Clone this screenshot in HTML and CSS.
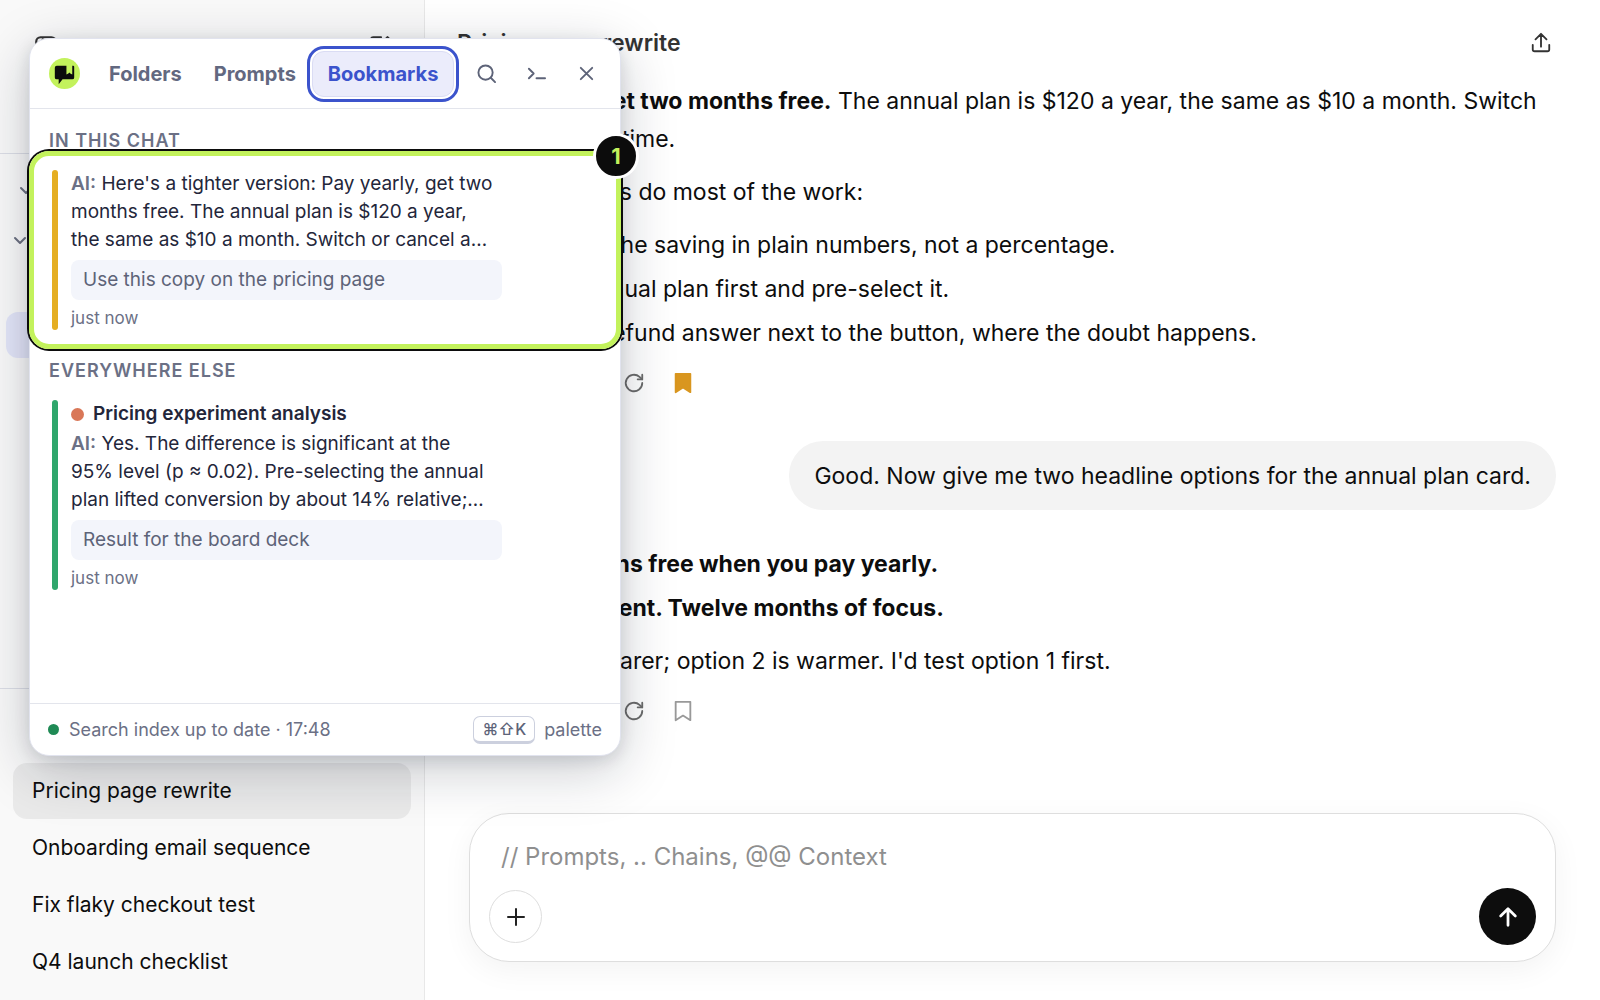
FILE: index.html
```html
<!DOCTYPE html>
<html lang="en">
<head>
  <meta charset="UTF-8" />
  <meta name="viewport" content="width=device-width, initial-scale=1.0" />
  <title>Pricing page rewrite</title>
  <link rel="stylesheet" href="styles.css">
</head>
<body>
  <div class="app">
    <!-- Sidebar -->
    <aside class="sidebar">
      <div class="sidebar-top">
        <svg class="icon-lg" viewBox="0 0 24 24"><rect x="3" y="3" width="18" height="18" rx="4"/><path d="M9 5v14"/></svg>
        <svg class="icon-lg" viewBox="0 0 24 24"><path d="M12 3H5a2 2 0 0 0-2 2v14a2 2 0 0 0 2 2h14a2 2 0 0 0 2-2v-7"/><path d="M18 3l3 3-9 9H9v-3z"/></svg>
      </div>

      <div class="folders">
        <div class="folder"><svg class="chevron" viewBox="0 0 16 16"><path d="M3 5l5 5 5-5"/></svg></div>
        <div class="folder outer"><svg class="chevron" viewBox="0 0 16 16"><path d="M3 5l5 5 5-5"/></svg></div>
        <div class="folder-active"></div>
      </div>

      <nav class="chats">
        <a href="#" class="chat active">Pricing page rewrite</a>
        <a href="#" class="chat">Onboarding email sequence</a>
        <a href="#" class="chat">Fix flaky checkout test</a>
        <a href="#" class="chat">Q4 launch checklist</a>
      </nav>
    </aside>

    <!-- Conversation -->
    <main class="main">
      <header class="topbar">
        <h1>Pricing page rewrite</h1>
        <button class="plain" aria-label="Share">
          <svg class="icon share" viewBox="0 0 24 24"><path d="M12 16V3M6 8l6-6 6 6M3 14v5a2 2 0 0 0 2 2h14a2 2 0 0 0 2-2v-5"/></svg>
        </button>
      </header>

      <div class="thread">
        <div class="answer">
          <p><b>Pay yearly, get two months free.</b> The annual plan is $120 a year, the same as $10 a month. Switch or cancel any time.</p>
          <p>Three changes do most of the work:</p>
          <ul>
            <li>Lead with the saving in plain numbers, not a percentage.</li>
            <li>Put the annual plan first and pre-select it.</li>
            <li>Keep the refund answer next to the button, where the doubt happens.</li>
          </ul>
          <div class="actions">
            <button class="plain" aria-label="Retry"><svg class="icon" viewBox="0 0 24 24"><path d="M21 12a9 9 0 1 1-3-6.700L21 8"/><path d="M21 3v5h-5"/></svg></button>
            <button class="plain" aria-label="Remove bookmark"><svg class="icon saved" viewBox="0 0 24 24"><path d="M4 2h16v20l-8-5-8 5z"/></svg></button>
          </div>
        </div>

        <div class="question">Good. Now give me two headline options for the annual plan card.</div>

        <div class="answer">
          <ol>
            <li><b>Two months free when you pay yearly.</b></li>
            <li><b>One payment. Twelve months of focus.</b></li>
          </ol>
          <p>Option 1 is clearer; option 2 is warmer. I'd test option 1 first.</p>
          <div class="actions">
            <button class="plain" aria-label="Retry"><svg class="icon" viewBox="0 0 24 24"><path d="M21 12a9 9 0 1 1-3-6.700L21 8"/><path d="M21 3v5h-5"/></svg></button>
            <button class="plain" aria-label="Bookmark"><svg class="icon unsaved" viewBox="0 0 24 24"><path d="M4 2h16v20l-8-5-8 5z"/></svg></button>
          </div>
        </div>
      </div>

      <form class="composer">
        <input type="text" aria-label="Message" placeholder="// Prompts, .. Chains, @@ Context" />
        <div class="composer-row">
          <button type="button" class="add" aria-label="Add"><svg viewBox="0 0 24 24"><path d="M12 4v16M4 12h16"/></svg></button>
          <button type="button" class="send" aria-label="Send"><svg viewBox="0 0 24 24"><path d="M12 21V3M4 11l8-8 8 8"/></svg></button>
        </div>
      </form>
    </main>
  </div>

  <!-- Floating panel -->
  <div class="panel">
    <div class="panel-head">
      <svg class="logo" viewBox="0 0 32 32"><circle cx="16" cy="16" r="16" fill="#c3f25c"/><path d="M8 8h10v9l2-1 1-1 1 1 2 1V8h1a1 1 0 0 1 1 1v11a2 2 0 0 1-2 2H14l-4 5v-5H8a2 2 0 0 1-2-2V10a2 2 0 0 1 2-2z" fill="#0c0c0c"/></svg>
      <div class="tabs">
        <button class="tab">Folders</button>
        <button class="tab">Prompts</button>
        <button class="tab current">Bookmarks</button>
      </div>
      <div class="tools">
        <button class="tool" aria-label="Search"><svg viewBox="0 0 20 20"><circle cx="9" cy="9" r="7.500"/><path d="M14.500 14.500L19 19"/></svg></button>
        <button class="tool" aria-label="Command palette"><svg viewBox="0 0 20 20"><path d="M2 5l5 5-5 5M10 15h9"/></svg></button>
        <button class="tool" aria-label="Close"><svg viewBox="0 0 20 20"><path d="M4 4l12 12M16 4L4 16"/></svg></button>
      </div>
    </div>

    <div class="panel-body">
      <h2>In this chat</h2>
      <article class="bookmark focused">
        <div class="bar gold"></div>
        <div class="bookmark-text">
          <p class="quote"><b>AI:</b> Here's a tighter version: Pay yearly, get two months free. The annual plan is $120 a year, the same as $10 a month. Switch or cancel a…</p>
          <p class="note">Use this copy on the pricing page</p>
          <p class="time">just now</p>
        </div>
        <span class="badge">1</span>
      </article>

      <h2>Everywhere else</h2>
      <article class="bookmark">
        <div class="bar green"></div>
        <div class="bookmark-text">
          <h3><span class="dot"></span>Pricing experiment analysis</h3>
          <p class="quote"><b>AI:</b> Yes. The difference is significant at the 95% level (p ≈ 0.02). Pre-selecting the annual plan lifted conversion by about 14% relative;…</p>
          <p class="note">Result for the board deck</p>
          <p class="time">just now</p>
        </div>
      </article>
    </div>

    <div class="panel-foot">
      <span class="status"></span>
      <span>Search index up to date · 17:48</span>
      <span class="shortcut"><kbd>⌘⇧K</kbd> palette</span>
    </div>
  </div>
</body>
</html>
```
FILE: styles.css
```css
* {
  box-sizing: border-box;
}

body {
  margin: 0;
  font-family: Inter, "Liberation Sans", sans-serif;
  color: #0d0d0d;
  background: #fff;
}

h1, h2, h3, p, ul, ol {
  margin: 0;
}

button, input {
  font-family: inherit;
}

button {
  cursor: pointer;
}

svg {
  display: block;
  fill: none;
  stroke: currentColor;
  stroke-width: 2;
  stroke-linecap: round;
  stroke-linejoin: round;
}

.app {
  display: flex;
  height: 100vh;
  overflow: hidden;
}

/* Sidebar */
.sidebar {
  width: 425px;
  flex: none;
  display: flex;
  flex-direction: column;
  background: #f9f9f9;
  border-right: 1px solid #e8e8e8;
}

.sidebar-top {
  display: flex;
  justify-content: space-between;
  align-items: flex-start;
  height: 154px;
  padding: 34px 30px 0 33px;
  border-bottom: 1px solid #dcdee6;
  color: #333;
}

.icon-lg {
  width: 26px;
  height: 26px;
}

.folders {
  height: 535px;
  padding: 12px 6px 0;
  border-bottom: 1px solid #dcdee6;
}

.folder {
  height: 50px;
  display: flex;
  align-items: center;
  padding-left: 12px;
  color: #6b7080;
}

.folder.outer {
  padding-left: 6px;
}

.chevron {
  width: 16px;
  height: 16px;
}

.folder-active {
  height: 46px;
  margin-top: 46px;
  border-radius: 12px;
  background: #e3e5f8;
}

.chats {
  display: flex;
  flex-direction: column;
  gap: 1px;
  padding: 74px 13px 0;
}

.chat {
  padding: 0 19px;
  font-size: 21px;
  line-height: 56px;
  color: #0d0d0d;
  text-decoration: none;
  border-radius: 14px;
}

.chat.active {
  background: #eaeaea;
}

/* Conversation */
.main {
  flex: 1;
  min-width: 0;
  display: flex;
  flex-direction: column;
}

.topbar {
  display: flex;
  align-items: center;
  justify-content: space-between;
  height: 82px;
  padding: 4px 48px 0 32px;
}

.topbar h1 {
  font-size: 23px;
  font-weight: 600;
  color: #333;
}

.plain {
  padding: 0;
  border: none;
  background: none;
  color: #6b6b6b;
}

.icon {
  width: 22px;
  height: 22px;
}

.share {
  color: #333;
}

.saved {
  fill: #d9961f;
  stroke: #d9961f;
}

.unsaved {
  color: #999;
}

.thread {
  flex: 1;
  display: flex;
  flex-direction: column;
  padding: 0 44px;
  font-size: 23px;
  line-height: 38px;
}

.answer {
  display: flex;
  flex-direction: column;
  gap: 15px;
}

.answer ul, .answer ol {
  display: flex;
  flex-direction: column;
  gap: 6px;
  padding-left: 36px;
}

.answer ul {
  padding-left: 32px;
}

.answer b {
  font-weight: 700;
}

.actions {
  display: flex;
  gap: 27px;
  padding: 5px 0 0 154px;
}

.question {
  align-self: flex-end;
  margin: 47px 0 35px;
  padding: 16px 25px 15px;
  border-radius: 34px;
  background: #f3f3f3;
}

.composer {
  margin: 0 44px 38px;
  padding: 16px 19px 16px;
  border: 1px solid #dedede;
  border-radius: 40px;
  background: #fff;
  box-shadow: 0 8px 30px rgba(0, 0, 0, 0.05);
}

.composer input {
  display: block;
  width: 100%;
  height: 52px;
  padding: 0 12px;
  border: none;
  outline: none;
  background: none;
  font-size: 24px;
}

.composer input::placeholder {
  color: #8f8f8f;
}

.composer-row {
  display: flex;
  align-items: center;
  justify-content: space-between;
  margin-top: 6px;
}

.add, .send {
  display: flex;
  align-items: center;
  justify-content: center;
  padding: 0;
  border-radius: 50%;
}

.add {
  width: 53px;
  height: 53px;
  border: 1px solid #dedede;
  background: #fff;
  color: #222;
}

.send {
  width: 57px;
  height: 57px;
  border: none;
  background: #0d0d0d;
  color: #fff;
}

.add svg {
  width: 24px;
  height: 24px;
}

.send svg {
  width: 22px;
  height: 22px;
  stroke-width: 3;
}

/* Floating panel */
.panel {
  position: absolute;
  top: 38px;
  left: 29px;
  width: 592px;
  height: 718px;
  display: flex;
  flex-direction: column;
  border: 1px solid #e1e3ee;
  border-radius: 20px;
  background: #fff;
  color: #23263a;
  box-shadow: 0 14px 56px rgba(15, 23, 42, 0.22), 0 4px 16px rgba(15, 23, 42, 0.12);
}

.panel-head {
  display: flex;
  align-items: center;
  height: 70px;
  padding: 0 9px 0 19px;
  border-bottom: 1px solid #e3e5ec;
}

.logo {
  width: 31px;
  height: 31px;
  stroke: none;
}

.tabs {
  display: flex;
  margin-left: 13px;
}

.tab {
  height: 46px;
  padding: 0 15px;
  border: 1px solid transparent;
  border-radius: 12px;
  background: none;
  font-size: 20px;
  font-weight: 700;
  color: #626880;
}

.tab.current {
  border-color: #dadcf4;
  background: #ebecfb;
  color: #3b53cc;
  outline: 3px solid #3b53cc;
  outline-offset: 2px;
}

.tools {
  display: flex;
  margin-left: auto;
}

.tool {
  width: 50px;
  height: 46px;
  display: flex;
  align-items: center;
  justify-content: center;
  padding: 0;
  border: none;
  background: none;
  color: #5d6378;
}

.tool svg {
  width: 19px;
  height: 19px;
}

.panel-body {
  flex: 1;
  padding-top: 5px;
}

.panel-body h2 {
  margin: 16px 0 4px;
  padding-left: 19px;
  font-size: 18px;
  font-weight: 600;
  line-height: 22px;
  letter-spacing: 1px;
  text-transform: uppercase;
  color: #6b7085;
}

.bookmark {
  position: relative;
  display: flex;
  gap: 13px;
  padding: 14px 118px 14px 22px;
}

/* highlight ring around the selected bookmark */
.focused::after {
  content: "";
  position: absolute;
  inset: -5px -1px;
  border: 5px solid #c3f25c;
  border-radius: 20px;
  box-shadow: 0 0 0 2px #0c0c0c;
  pointer-events: none;
}

.badge {
  position: absolute;
  top: -23px;
  right: -19px;
  z-index: 1;
  width: 46px;
  height: 46px;
  border: 3px solid #fff;
  border-radius: 50%;
  background: #0c0c0c;
  color: #c3f25c;
  font-size: 22px;
  font-weight: 700;
  line-height: 40px;
  text-align: center;
}

.bar {
  width: 6px;
  flex: none;
  border-radius: 3px;
}

.gold {
  background: #e5ae22;
}

.green {
  background: #2fa66c;
}

.bookmark-text {
  flex: 1;
  min-width: 0;
}

.bookmark h3 {
  display: flex;
  align-items: center;
  gap: 9px;
  margin-bottom: 2px;
  font-size: 19px;
  font-weight: 600;
  line-height: 28px;
}

.dot {
  width: 13px;
  height: 13px;
  border-radius: 50%;
  background: #d97757;
}

.quote {
  padding-right: 8px;
  font-size: 19px;
  line-height: 28px;
}

.quote b {
  font-weight: 600;
  color: #6b7085;
}

.note {
  margin: 6px 0;
  padding: 0 12px;
  border-radius: 8px;
  background: #f3f5fb;
  font-size: 19px;
  line-height: 40px;
  color: #5d6378;
}

.time {
  font-size: 17px;
  line-height: 24px;
  color: #6b7085;
}

.panel-foot {
  display: flex;
  align-items: center;
  height: 52px;
  padding: 0 18px;
  border-top: 1px solid #e3e5ec;
  font-size: 18px;
  color: #6b7085;
}

.status {
  width: 11px;
  height: 11px;
  margin-right: 10px;
  border-radius: 50%;
  background: #1f8a55;
}

.shortcut {
  display: flex;
  align-items: center;
  gap: 9px;
  margin-left: auto;
}

kbd {
  padding: 0 8px;
  border: 1px solid #ccd0de;
  border-bottom-width: 3px;
  border-radius: 7px;
  font-family: inherit;
  font-size: 16px;
  font-weight: 500;
  line-height: 24px;
  color: #5d6378;
}
```
